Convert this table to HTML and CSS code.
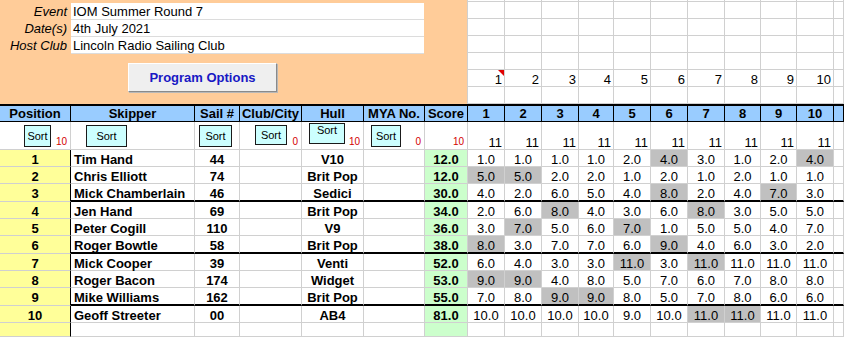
FILE: index.html
```html
<!DOCTYPE html>
<html>
<head>
<meta charset="utf-8">
<link rel="stylesheet" href="styles.css">
</head>
<body>
<div class="top">
  <div class="banner">
    <div class="info">
      <div class="lbl">Event</div><div class="val">IOM Summer Round 7</div>
      <div class="lbl">Date(s)</div><div class="val">4th July 2021</div>
      <div class="lbl">Host Club</div><div class="val">Lincoln Radio Sailing Club</div>
    </div>
    <button class="prog">Program Options</button>
  </div>
  <div class="racegrid">
    <div class="t"></div><div class="t"></div><div class="t"></div><div class="t"></div><div class="t"></div><div class="t"></div><div class="t"></div><div class="t"></div><div class="t"></div><div class="t"></div><div class="t"></div>
    <div class="t"></div><div class="t"></div><div class="t"></div><div class="t"></div><div class="t"></div><div class="t"></div><div class="t"></div><div class="t"></div><div class="t"></div><div class="t"></div><div class="t"></div>
    <div class="t"></div><div class="t"></div><div class="t"></div><div class="t"></div><div class="t"></div><div class="t"></div><div class="t"></div><div class="t"></div><div class="t"></div><div class="t"></div><div class="t"></div>
    <div class="t"></div><div class="t"></div><div class="t"></div><div class="t"></div><div class="t"></div><div class="t"></div><div class="t"></div><div class="t"></div><div class="t"></div><div class="t"></div><div class="t"></div>
    <div class="t"></div><div class="t"></div><div class="t"></div><div class="t"></div><div class="t"></div><div class="t"></div><div class="t"></div><div class="t"></div><div class="t"></div><div class="t"></div><div class="t"></div>
    <div class="t n note">1</div><div class="t n">2</div><div class="t n">3</div><div class="t n">4</div><div class="t n">5</div><div class="t n">6</div><div class="t n">7</div><div class="t n">8</div><div class="t n">9</div><div class="t n">10</div><div class="t"></div>
    <div class="t"></div><div class="t"></div><div class="t"></div><div class="t"></div><div class="t"></div><div class="t"></div><div class="t"></div><div class="t"></div><div class="t"></div><div class="t"></div><div class="t"></div>
  </div>
</div>
<div class="sheet">
  <div class="h">Position</div><div class="h">Skipper</div><div class="h">Sail #</div><div class="h">Club/City</div><div class="h">Hull</div><div class="h">MYA No.</div><div class="h">Score</div>
  <div class="h">1</div><div class="h">2</div><div class="h">3</div><div class="h">4</div><div class="h">5</div><div class="h">6</div><div class="h">7</div><div class="h">8</div><div class="h">9</div><div class="h">10</div><div class="h"></div>

  <div class="s"><span class="sort sp">Sort</span><span class="cnt">10</span></div>
  <div class="s"><span class="sort ss">Sort</span></div>
  <div class="s"><span class="sort sn">Sort</span></div>
  <div class="s"><span class="sort sc">Sort</span><span class="cnt">0</span></div>
  <div class="s"><span class="sort sh">Sort</span><span class="cnt">10</span></div>
  <div class="s"><span class="sort sm">Sort</span><span class="cnt">0</span></div>
  <div class="s"><span class="cnt">10</span></div>
  <div class="c eleven">11</div><div class="c eleven">11</div><div class="c eleven">11</div><div class="c eleven">11</div><div class="c eleven">11</div><div class="c eleven">11</div><div class="c eleven">11</div><div class="c eleven">11</div><div class="c eleven">11</div><div class="c eleven">11</div><div class="c"></div>

  <div class="row"><div class="c pos">1</div><div class="c name">Tim Hand</div><div class="c b">44</div><div class="c"></div><div class="c b">V10</div><div class="c"></div><div class="c score">12.0</div><div class="c r">1.0</div><div class="c r">1.0</div><div class="c r">1.0</div><div class="c r">1.0</div><div class="c r">2.0</div><div class="c r g">4.0</div><div class="c r">3.0</div><div class="c r">1.0</div><div class="c r">2.0</div><div class="c r g">4.0</div><div class="c"></div></div>
  <div class="row"><div class="c pos">2</div><div class="c name">Chris Elliott</div><div class="c b">74</div><div class="c"></div><div class="c b">Brit Pop</div><div class="c"></div><div class="c score">12.0</div><div class="c r g">5.0</div><div class="c r g">5.0</div><div class="c r">2.0</div><div class="c r">2.0</div><div class="c r">1.0</div><div class="c r">2.0</div><div class="c r">1.0</div><div class="c r">2.0</div><div class="c r">1.0</div><div class="c r">1.0</div><div class="c"></div></div>
  <div class="row sep"><div class="c pos">3</div><div class="c name">Mick Chamberlain</div><div class="c b">46</div><div class="c"></div><div class="c b">Sedici</div><div class="c"></div><div class="c score">30.0</div><div class="c r">4.0</div><div class="c r">2.0</div><div class="c r">6.0</div><div class="c r">5.0</div><div class="c r">4.0</div><div class="c r g">8.0</div><div class="c r">2.0</div><div class="c r">4.0</div><div class="c r g">7.0</div><div class="c r">3.0</div><div class="c"></div></div>
  <div class="row"><div class="c pos">4</div><div class="c name">Jen Hand</div><div class="c b">69</div><div class="c"></div><div class="c b">Brit Pop</div><div class="c"></div><div class="c score">34.0</div><div class="c r">2.0</div><div class="c r">6.0</div><div class="c r g">8.0</div><div class="c r">4.0</div><div class="c r">3.0</div><div class="c r">6.0</div><div class="c r g">8.0</div><div class="c r">3.0</div><div class="c r">5.0</div><div class="c r">5.0</div><div class="c"></div></div>
  <div class="row"><div class="c pos">5</div><div class="c name">Peter Cogill</div><div class="c b">110</div><div class="c"></div><div class="c b">V9</div><div class="c"></div><div class="c score">36.0</div><div class="c r">3.0</div><div class="c r g">7.0</div><div class="c r">5.0</div><div class="c r">6.0</div><div class="c r g">7.0</div><div class="c r">1.0</div><div class="c r">5.0</div><div class="c r">5.0</div><div class="c r">4.0</div><div class="c r">7.0</div><div class="c"></div></div>
  <div class="row sep"><div class="c pos">6</div><div class="c name">Roger Bowtle</div><div class="c b">58</div><div class="c"></div><div class="c b">Brit Pop</div><div class="c"></div><div class="c score">38.0</div><div class="c r g">8.0</div><div class="c r">3.0</div><div class="c r">7.0</div><div class="c r">7.0</div><div class="c r">6.0</div><div class="c r g">9.0</div><div class="c r">4.0</div><div class="c r">6.0</div><div class="c r">3.0</div><div class="c r">2.0</div><div class="c"></div></div>
  <div class="row"><div class="c pos">7</div><div class="c name">Mick Cooper</div><div class="c b">39</div><div class="c"></div><div class="c b">Venti</div><div class="c"></div><div class="c score">52.0</div><div class="c r">6.0</div><div class="c r">4.0</div><div class="c r">3.0</div><div class="c r">3.0</div><div class="c r g">11.0</div><div class="c r">3.0</div><div class="c r g">11.0</div><div class="c r">11.0</div><div class="c r">11.0</div><div class="c r">11.0</div><div class="c"></div></div>
  <div class="row"><div class="c pos">8</div><div class="c name">Roger Bacon</div><div class="c b">174</div><div class="c"></div><div class="c b">Widget</div><div class="c"></div><div class="c score">53.0</div><div class="c r g">9.0</div><div class="c r g">9.0</div><div class="c r">4.0</div><div class="c r">8.0</div><div class="c r">5.0</div><div class="c r">7.0</div><div class="c r">6.0</div><div class="c r">7.0</div><div class="c r">8.0</div><div class="c r">8.0</div><div class="c"></div></div>
  <div class="row sep"><div class="c pos">9</div><div class="c name">Mike Williams</div><div class="c b">162</div><div class="c"></div><div class="c b">Brit Pop</div><div class="c"></div><div class="c score">55.0</div><div class="c r">7.0</div><div class="c r">8.0</div><div class="c r g">9.0</div><div class="c r g">9.0</div><div class="c r">8.0</div><div class="c r">5.0</div><div class="c r">7.0</div><div class="c r">8.0</div><div class="c r">6.0</div><div class="c r">6.0</div><div class="c"></div></div>
  <div class="row"><div class="c pos">10</div><div class="c name">Geoff Streeter</div><div class="c b">00</div><div class="c"></div><div class="c b">AB4</div><div class="c"></div><div class="c score">81.0</div><div class="c r">10.0</div><div class="c r">10.0</div><div class="c r">10.0</div><div class="c r">10.0</div><div class="c r">9.0</div><div class="c r">10.0</div><div class="c r g">11.0</div><div class="c r g">11.0</div><div class="c r">11.0</div><div class="c r">11.0</div><div class="c"></div></div>
  <div class="row"><div class="c pos"></div><div class="c"></div><div class="c"></div><div class="c"></div><div class="c"></div><div class="c"></div><div class="c score"></div><div class="c"></div><div class="c"></div><div class="c"></div><div class="c"></div><div class="c"></div><div class="c"></div><div class="c"></div><div class="c"></div><div class="c"></div><div class="c"></div><div class="c"></div></div>
</div>
</body>
</html>
```

FILE: styles.css
```css
* { box-sizing: border-box; }
html, body { margin: 0; padding: 0; }
body {
  width: 844px;
  height: 337px;
  overflow: hidden;
  background: #fff;
  font-family: "Liberation Sans", Arial, sans-serif;
  font-size: 13px;
  color: #000;
}

/* ---------- top area ---------- */
.top { display: flex; height: 104px; }
.banner {
  width: 468px;
  background: #ffcc99;
  border-right: 1px solid #d0d0d0;
  padding-top: 3px;
}
.info { display: grid; grid-template-columns: 71px 353px; grid-auto-rows: 17px; }
.lbl {
  font-style: italic;
  text-align: right;
  padding: 1px 4px 0 0;
  line-height: 15px;
}
.val {
  background: #fff;
  border-bottom: 1px solid #dcdcdc;
  padding: 1px 0 0 2px;
  line-height: 15px;
}
.prog {
  display: flex;
  align-items: center;
  justify-content: center;
  margin: 9px 0 0 128px;
  width: 149px;
  height: 29px;
  padding: 0 0 1px 0;
  background: #efefef;
  border: 1px solid;
  border-color: #ffffff #8a8a8a #8a8a8a #ffffff;
  box-shadow: 1px 1px 0 #b8b8b8;
  font-family: "Liberation Sans", Arial, sans-serif;
  font-size: 13px;
  font-weight: bold;
  color: #1818c4;
}
.racegrid {
  display: grid;
  grid-template-columns: 37px 37px 37px 35px 37px 37px 37px 36px 36px 37px 10px;
  grid-template-rows: 2px repeat(6, 17px);
}
.t {
  border-right: 1px solid #d0d0d0;
  border-bottom: 1px solid #d0d0d0;
}
.n {
  text-align: right;
  padding: 2px 2px 0 0;
  line-height: 15px;
}
.note { position: relative; }
.note::after {
  content: "";
  position: absolute;
  top: 0;
  right: 0;
  border-top: 6px solid #e00000;
  border-left: 6px solid transparent;
}

/* ---------- sheet ---------- */
.sheet {
  display: grid;
  grid-template-columns: 71px 124px 45px 62px 62px 61px 43px 37px 37px 37px 35px 37px 37px 37px 36px 36px 37px 10px;
  grid-template-rows: 18px 28px 17px 17px 18px 17px 17px 18px 17px 17px 18px 17px 14px;
}
.row { display: contents; }

.h {
  background: #99ccff;
  border-top: 2px solid #000;
  border-bottom: 1px solid #000;
  border-right: 1px solid #000;
  font-weight: bold;
  text-align: center;
  line-height: 15px;
  white-space: nowrap;
}

.s {
  display: flex;
  align-items: flex-start;
  border-right: 1px solid #d0d0d0;
  border-bottom: 1px solid #d0d0d0;
}
.sort {
  display: flex;
  align-items: center;
  justify-content: center;
  height: 22px;
  margin-top: 3px;
  border: 1px solid #1a1a1a;
  background: #ccffff;
  font-size: 11px;
  padding-bottom: 1px;
}
.sp { margin-left: 24px; width: 27px; }
.ss { margin-left: 15px; width: 41px; }
.sn { margin-left: 4px; width: 33px; }
.sc { margin-left: 15px; width: 32px; height: 20px; }
.sh { margin-left: 7px; width: 36px; height: 21px; margin-top: 1px; align-items: flex-start; }
.sm { margin-left: 7px; width: 30px; }
.cnt {
  margin-left: auto;
  margin-top: 14px;
  padding-right: 3px;
  font-size: 10px;
  line-height: 12px;
  color: #d40000;
}

.c {
  border-right: 1px solid #d0d0d0;
  border-bottom: 1px solid #d0d0d0;
  padding-top: 2px;
  line-height: 15px;
  white-space: nowrap;
}
.c.eleven {
  text-align: right;
  padding: 13px 2px 0 0;
}
.pos {
  background: #ffff99;
  border-right-color: #000;
  font-weight: bold;
  text-align: center;
}
.name { font-weight: bold; padding-left: 3px; }
.b { font-weight: bold; text-align: center; }
.score { background: #ccffcc; font-weight: bold; text-align: center; }
.r { text-align: center; }
.g { background: #c0c0c0; }
.sep > .c:not(.pos) { border-bottom: 2px solid #000; }
```
